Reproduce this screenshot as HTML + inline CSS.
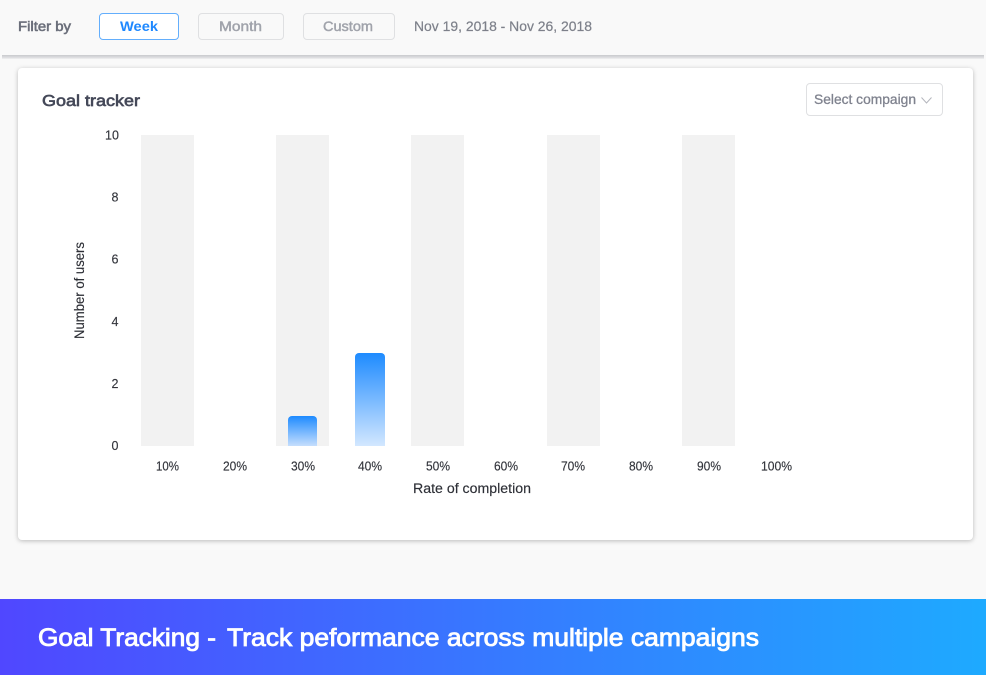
<!DOCTYPE html>
<html>
<head>
<meta charset="utf-8">
<style>
html,body{margin:0;padding:0;width:986px;height:675px;overflow:hidden;background:#f9f9f9}
body{position:relative;font-family:"Liberation Sans",sans-serif}
.abs{position:absolute;box-sizing:border-box}
.btn{top:13px;height:27px;border:1.5px solid #dfe0e2;border-radius:4px;background:#f9f9f9}
.col{top:135px;width:53px;height:311px;background:#f2f2f2}
.bar{width:29.500px;border-radius:4px 4px 0 0;background:linear-gradient(#1e8bff,#d3e7ff)}
svg{position:absolute;left:0;top:0}
</style>
</head>
<body>
<div class="abs" style="left:2px;top:55px;width:982px;height:4px;background:linear-gradient(#c9cacd,#dcdde0 60%,#f1f1f2)"></div>
<div class="abs" style="left:18px;top:68px;width:955px;height:472px;background:#fff;border-radius:4px;box-shadow:0 1px 5px rgba(0,0,0,.25)"></div>

<div class="abs btn" style="left:99px;width:80px;background:#fff;border-color:#63aefc"></div>
<div class="abs btn" style="left:198px;width:86px"></div>
<div class="abs btn" style="left:303px;width:92px"></div>

<div class="abs" style="left:806px;top:83px;width:137px;height:33px;border:1px solid #dfe0e2;border-radius:4px;background:#fff"></div>

<div class="abs col" style="left:141px"></div>
<div class="abs col" style="left:276px"></div>
<div class="abs col" style="left:411px"></div>
<div class="abs col" style="left:547px"></div>
<div class="abs col" style="left:682px"></div>
<div class="abs bar" style="left:287.500px;top:416px;height:30px;background:linear-gradient(#1e8bff,#c5defd)"></div>
<div class="abs bar" style="left:355px;top:353px;height:93px"></div>

<div class="abs" style="left:0;top:599px;width:986px;height:76px;background:linear-gradient(90deg,#5047ff,#1eaaff)"></div>

<svg width="986" height="675" viewBox="0 0 986 675" font-family="'Liberation Sans',sans-serif">
  <g font-size="14">
    <text x="18" y="31" fill="#6b6f7b" font-size="13.500" stroke="#6b6f7b" stroke-width=".55" textLength="53" lengthAdjust="spacingAndGlyphs">Filter by</text>
    <text x="120" y="31" fill="#1e88ff" font-weight="bold" textLength="38" lengthAdjust="spacingAndGlyphs">Week</text>
    <text x="219" y="31" fill="#a0a3ab" stroke="#a0a3ab" stroke-width=".45" textLength="43" lengthAdjust="spacingAndGlyphs">Month</text>
    <text x="323" y="31" fill="#a0a3ab" stroke="#a0a3ab" stroke-width=".45" textLength="50" lengthAdjust="spacingAndGlyphs">Custom</text>
    <text x="414" y="31" fill="#7d808a" stroke="#7d808a" stroke-width=".2" textLength="178" lengthAdjust="spacingAndGlyphs">Nov 19, 2018 - Nov 26, 2018</text>
    <text x="814" y="104" fill="#7f828e" stroke="#7f828e" stroke-width=".3" textLength="102" lengthAdjust="spacingAndGlyphs">Select compaign</text>
  </g>
  <text x="42" y="106" fill="#454959" stroke="#454959" stroke-width=".65" font-size="16" textLength="98" lengthAdjust="spacingAndGlyphs">Goal tracker</text>
  <path d="M921.500 97.500L926.500 103L931.500 97.500" fill="none" stroke="#b4b6bd" stroke-width="1"/>

  <g font-size="12.500" fill="#33353c" stroke="#33353c" stroke-width=".15" text-anchor="middle">
    <text x="112" y="139.500">10</text>
    <text x="115" y="201.500">8</text>
    <text x="115" y="263.500">6</text>
    <text x="115" y="326">4</text>
    <text x="115" y="388">2</text>
    <text x="115" y="450">0</text>
  </g>
  <g font-size="12.500" fill="#33353c" stroke="#33353c" stroke-width=".15">
    <text x="156" y="470.500" textLength="23" lengthAdjust="spacingAndGlyphs">10%</text>
    <text x="223" y="470.500" textLength="24" lengthAdjust="spacingAndGlyphs">20%</text>
    <text x="291" y="470.500" textLength="24" lengthAdjust="spacingAndGlyphs">30%</text>
    <text x="358" y="470.500" textLength="24" lengthAdjust="spacingAndGlyphs">40%</text>
    <text x="426" y="470.500" textLength="24" lengthAdjust="spacingAndGlyphs">50%</text>
    <text x="494" y="470.500" textLength="24" lengthAdjust="spacingAndGlyphs">60%</text>
    <text x="561" y="470.500" textLength="24" lengthAdjust="spacingAndGlyphs">70%</text>
    <text x="629" y="470.500" textLength="24" lengthAdjust="spacingAndGlyphs">80%</text>
    <text x="697" y="470.500" textLength="24" lengthAdjust="spacingAndGlyphs">90%</text>
    <text x="761" y="470.500" textLength="31" lengthAdjust="spacingAndGlyphs">100%</text>
  </g>
  <text x="413" y="493" font-size="13.500" fill="#2d2f36" stroke="#2d2f36" stroke-width=".15" textLength="118" lengthAdjust="spacingAndGlyphs">Rate of completion</text>
  <text transform="translate(84,339) rotate(-90)" font-size="13.500" fill="#2d2f36" stroke="#2d2f36" stroke-width=".15" textLength="97" lengthAdjust="spacingAndGlyphs">Number of users</text>

  <g font-size="25" fill="#ffffff" stroke="#ffffff" stroke-width=".85">
    <text x="38" y="646" textLength="178" lengthAdjust="spacingAndGlyphs">Goal Tracking -</text>
    <text x="227" y="646" textLength="532" lengthAdjust="spacingAndGlyphs">Track peformance across multiple campaigns</text>
  </g>
</svg>
</body>
</html>
